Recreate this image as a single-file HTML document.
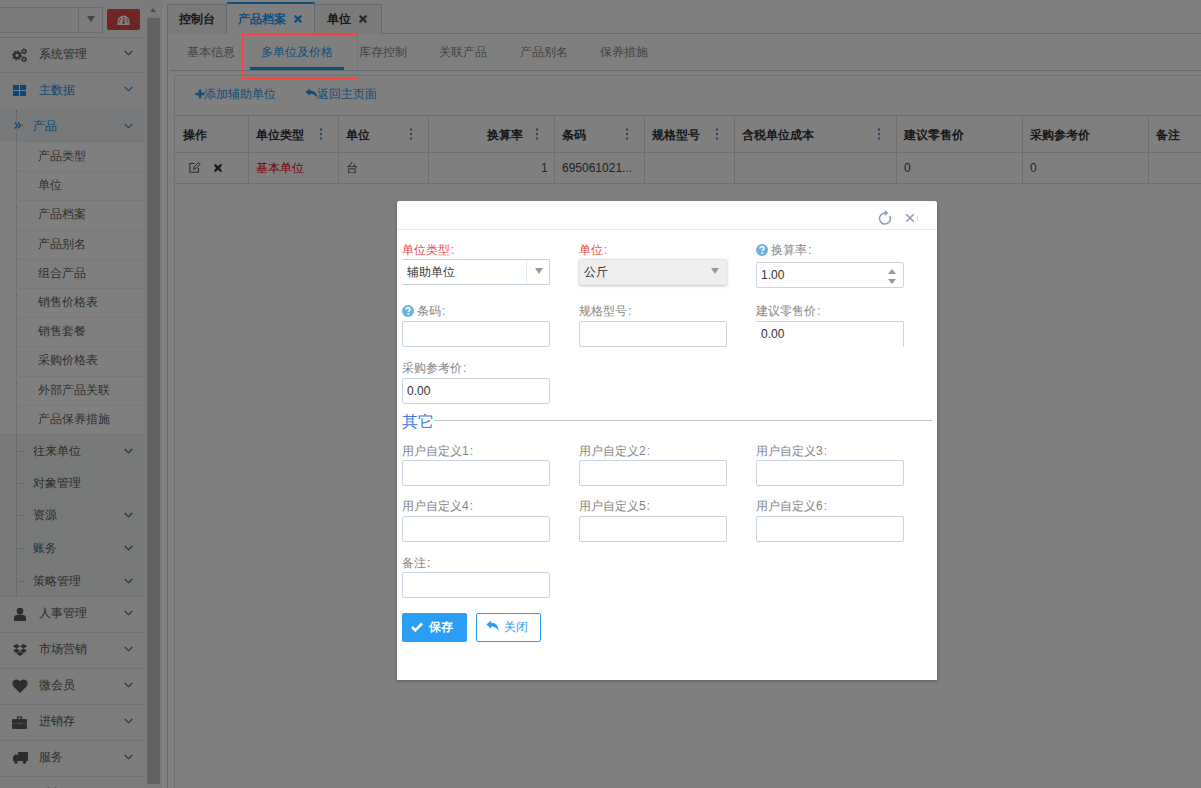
<!DOCTYPE html><html><head><meta charset="utf-8"><style>
*{box-sizing:border-box;margin:0;padding:0}
html,body{width:1201px;height:788px;overflow:hidden;background:#fff;font-family:"Liberation Sans",sans-serif;font-size:12px;color:#393939}
.a{position:absolute;white-space:nowrap}
#ov{position:absolute;left:0;top:0;width:1201px;height:788px;background:rgba(0,0,0,.5)}
#md{position:absolute;left:397px;top:201px;width:540px;height:479px;background:#fff;border-radius:2px 2px 0 0;box-shadow:0 1px 3px rgba(0,0,0,.3)}
.ip{position:absolute;width:148px;height:26px;border:1px solid #c8d4e0;border-radius:2px;background:#fff;font-size:12px;color:#333;padding-left:4px;line-height:25px}
</style></head><body>
<div class="a" style="left:160px;top:0px;width:1041px;height:788px;background:#fff"></div>
<div class="a" style="left:167px;top:33px;width:1034px;height:1px;background:#c5d5e5"></div>
<div class="a" style="left:167px;top:33px;width:1px;height:755px;background:#c5d5e5"></div>
<div class="a" style="left:167px;top:4px;width:60px;height:30px;background:#f4f4f4;border:1px solid #c5d5e5;border-bottom:none"></div>
<div class="a" style="left:179px;top:11px;font-weight:bold;color:#333;font-size:12px;line-height:16px">控制台</div>
<div class="a" style="left:227px;top:2px;width:88px;height:32px;background:#fff;border-top:2px solid #1e9fff;border-right:1px solid #c5d5e5"></div>
<div class="a" style="left:238px;top:11px;color:#1e9fff;font-size:12px;font-weight:bold;line-height:16px">产品档案</div>
<svg class="a" style="left:294px;top:15px" width="8" height="8" viewBox="0 0 9 9"><path d="M1.5 1.5L7.5 7.5M7.5 1.5L1.5 7.5" stroke="#1e9fff" stroke-width="2.6" stroke-linecap="round"/></svg>
<div class="a" style="left:315px;top:4px;width:67px;height:30px;background:#f4f4f4;border:1px solid #c5d5e5;border-left:none;border-bottom:none"></div>
<div class="a" style="left:327px;top:11px;font-weight:bold;color:#333;font-size:12px;line-height:16px">单位</div>
<svg class="a" style="left:359px;top:15px" width="8" height="8" viewBox="0 0 9 9"><path d="M1.5 1.5L7.5 7.5M7.5 1.5L1.5 7.5" stroke="#555" stroke-width="2.6" stroke-linecap="round"/></svg>
<div class="a" style="left:187px;top:44px;color:#888;font-size:12px;line-height:16px">基本信息</div>
<div class="a" style="left:359px;top:44px;color:#888;font-size:12px;line-height:16px">库存控制</div>
<div class="a" style="left:439px;top:44px;color:#888;font-size:12px;line-height:16px">关联产品</div>
<div class="a" style="left:520px;top:44px;color:#888;font-size:12px;line-height:16px">产品别名</div>
<div class="a" style="left:600px;top:44px;color:#888;font-size:12px;line-height:16px">保养措施</div>
<div class="a" style="left:261px;top:44px;color:#1e9fff;font-size:12px;line-height:16px">多单位及价格</div>
<div class="a" style="left:250px;top:67px;width:94px;height:3px;background:#1e9fff"></div>
<div class="a" style="left:170px;top:70px;width:1031px;height:1px;background:#c5d5e5"></div>
<div class="a" style="left:174px;top:75px;width:1030px;height:720px;border:1px solid #dde3e8;background:#fff"></div>
<svg class="a" style="left:195px;top:89px" width="10" height="10" viewBox="0 0 10 10"><path d="M5 0.5V9.5M0.5 5H9.5" stroke="#2a9af2" stroke-width="2.6"/></svg>
<div class="a" style="left:204px;top:86px;color:#2a9af2;font-size:12px;line-height:16px">添加辅助单位</div>
<svg class="a" style="left:305px;top:88px" width="13" height="11" viewBox="0 0 12 10"><path d="M0.5 3.5L4.5 0.3V2.2C8.5 2.2 11.5 4.5 11.5 9.5 10 7 8 5.3 4.5 5.3V7z" fill="#2a9af2"/></svg>
<div class="a" style="left:317px;top:86px;color:#2a9af2;font-size:12px;line-height:16px">返回主页面</div>
<div class="a" style="left:175px;top:115px;width:1026px;height:1px;background:#d5dde5"></div>
<div class="a" style="left:175px;top:152px;width:1026px;height:1px;background:#dcdcdc"></div>
<div class="a" style="left:175px;top:183px;width:1026px;height:1px;background:#dcdcdc"></div>
<div class="a" style="left:248px;top:116px;width:1px;height:67px;background:#dcdcdc"></div>
<div class="a" style="left:338px;top:116px;width:1px;height:67px;background:#dcdcdc"></div>
<div class="a" style="left:428px;top:116px;width:1px;height:67px;background:#dcdcdc"></div>
<div class="a" style="left:554px;top:116px;width:1px;height:67px;background:#dcdcdc"></div>
<div class="a" style="left:644px;top:116px;width:1px;height:67px;background:#dcdcdc"></div>
<div class="a" style="left:734px;top:116px;width:1px;height:67px;background:#dcdcdc"></div>
<div class="a" style="left:896px;top:116px;width:1px;height:67px;background:#dcdcdc"></div>
<div class="a" style="left:1022px;top:116px;width:1px;height:67px;background:#dcdcdc"></div>
<div class="a" style="left:1148px;top:116px;width:1px;height:67px;background:#dcdcdc"></div>
<div class="a" style="left:183px;top:127px;font-weight:bold;color:#333;font-size:12px;line-height:16px">操作</div>
<div class="a" style="left:256px;top:127px;font-weight:bold;color:#333;font-size:12px;line-height:16px">单位类型</div>
<svg class="a" style="left:319px;top:127px" width="4" height="14" viewBox="0 0 4 14"><circle cx="2" cy="2.5" r="1.2" fill="#5a8dc0"/><circle cx="2" cy="7" r="1.2" fill="#5a8dc0"/><circle cx="2" cy="11.5" r="1.2" fill="#5a8dc0"/></svg>
<div class="a" style="left:346px;top:127px;font-weight:bold;color:#333;font-size:12px;line-height:16px">单位</div>
<svg class="a" style="left:409px;top:127px" width="4" height="14" viewBox="0 0 4 14"><circle cx="2" cy="2.5" r="1.2" fill="#5a8dc0"/><circle cx="2" cy="7" r="1.2" fill="#5a8dc0"/><circle cx="2" cy="11.5" r="1.2" fill="#5a8dc0"/></svg>
<div class="a" style="left:487px;top:127px;font-weight:bold;color:#333;font-size:12px;line-height:16px">换算率</div>
<svg class="a" style="left:535px;top:127px" width="4" height="14" viewBox="0 0 4 14"><circle cx="2" cy="2.5" r="1.2" fill="#5a8dc0"/><circle cx="2" cy="7" r="1.2" fill="#5a8dc0"/><circle cx="2" cy="11.5" r="1.2" fill="#5a8dc0"/></svg>
<div class="a" style="left:562px;top:127px;font-weight:bold;color:#333;font-size:12px;line-height:16px">条码</div>
<svg class="a" style="left:625px;top:127px" width="4" height="14" viewBox="0 0 4 14"><circle cx="2" cy="2.5" r="1.2" fill="#5a8dc0"/><circle cx="2" cy="7" r="1.2" fill="#5a8dc0"/><circle cx="2" cy="11.5" r="1.2" fill="#5a8dc0"/></svg>
<div class="a" style="left:652px;top:127px;font-weight:bold;color:#333;font-size:12px;line-height:16px">规格型号</div>
<svg class="a" style="left:715px;top:127px" width="4" height="14" viewBox="0 0 4 14"><circle cx="2" cy="2.5" r="1.2" fill="#5a8dc0"/><circle cx="2" cy="7" r="1.2" fill="#5a8dc0"/><circle cx="2" cy="11.5" r="1.2" fill="#5a8dc0"/></svg>
<div class="a" style="left:742px;top:127px;font-weight:bold;color:#333;font-size:12px;line-height:16px">含税单位成本</div>
<svg class="a" style="left:877px;top:127px" width="4" height="14" viewBox="0 0 4 14"><circle cx="2" cy="2.5" r="1.2" fill="#5a8dc0"/><circle cx="2" cy="7" r="1.2" fill="#5a8dc0"/><circle cx="2" cy="11.5" r="1.2" fill="#5a8dc0"/></svg>
<div class="a" style="left:904px;top:127px;font-weight:bold;color:#333;font-size:12px;line-height:16px">建议零售价</div>
<div class="a" style="left:1030px;top:127px;font-weight:bold;color:#333;font-size:12px;line-height:16px">采购参考价</div>
<div class="a" style="left:1156px;top:127px;font-weight:bold;color:#333;font-size:12px;line-height:16px">备注</div>
<svg class="a" style="left:189px;top:162px" width="12" height="11" viewBox="0 0 12 11"><path d="M5.5 1.5H0.8V10.2H9.5V6" fill="none" stroke="#555" stroke-width="1.1"/><path d="M4.5 7.2L5 5 9.5 0.6 11.2 2.3 6.7 6.7z" fill="none" stroke="#555" stroke-width="1"/></svg>
<svg class="a" style="left:214px;top:164px" width="8" height="8" viewBox="0 0 9 9"><path d="M1.5 1.5L7.5 7.5M7.5 1.5L1.5 7.5" stroke="#333" stroke-width="2.6" stroke-linecap="round"/></svg>
<div class="a" style="left:256px;top:160px;color:#f00000;font-size:12px;line-height:16px">基本单位</div>
<div class="a" style="left:346px;top:160px;color:#444;font-size:12px;line-height:16px">台</div>
<div class="a" style="left:541px;top:160px;color:#444;font-size:12px;line-height:16px">1</div>
<div class="a" style="left:562px;top:160px;color:#444;font-size:12px;line-height:16px">695061021...</div>
<div class="a" style="left:904px;top:160px;color:#444;font-size:12px;line-height:16px">0</div>
<div class="a" style="left:1030px;top:160px;color:#444;font-size:12px;line-height:16px">0</div>
<div class="a" style="left:0px;top:0px;width:145px;height:788px;background:#f8f8f8"></div>
<div class="a" style="left:0px;top:0px;width:145px;height:38px;border-bottom:1px solid #e0e0e0;background:#f8f8f8"></div>
<div class="a" style="left:-2px;top:7px;width:105px;height:26px;border:1px solid #d0d8e0;background:#f6f6f6"></div>
<div class="a" style="left:78px;top:7px;width:25px;height:26px;border:1px solid #d0d8e0;background:#f8f8f8"></div>
<div class="a" style="left:87px;top:16px;width:0px;height:0px;border-left:4px solid transparent;border-right:4px solid transparent;border-top:6px solid #888"></div>
<div class="a" style="left:107px;top:9px;width:33px;height:21px;background:#e04a4a;border-radius:2px"></div>
<svg class="a" style="left:117px;top:15px" width="13" height="11" viewBox="0 0 15 12" preserveAspectRatio="none"><path d="M7.5 0.5A7 7 0 0 0 0.5 7.5V11h14V7.5A7 7 0 0 0 7.5 0.5z" fill="#fff"/><circle cx="7.5" cy="3" r="0.9" fill="#e04a4a"/><circle cx="3.7" cy="4.5" r="0.9" fill="#e04a4a"/><circle cx="11.3" cy="4.5" r="0.9" fill="#e04a4a"/><circle cx="2.6" cy="7.3" r="0.9" fill="#e04a4a"/><circle cx="12.4" cy="7.3" r="0.9" fill="#e04a4a"/><path d="M7.5 8.5L8.3 4" stroke="#e04a4a" stroke-width="1.4"/><circle cx="7.5" cy="8.5" r="1.4" fill="#e04a4a"/></svg>
<div class="a" style="left:0px;top:38px;width:145px;height:35px;background:#f8f8f8;border-bottom:1px solid #e5e5e5"></div><svg class="a" style="left:11px;top:calc(54.5px - 7.0px)" width="16" height="14" viewBox="0 0 16 14"><circle cx="6" cy="7.35" r="2.8" fill="none" stroke="#5a5a5a" stroke-width="2.2"/><circle cx="6" cy="7.35" r="4.3" fill="none" stroke="#5a5a5a" stroke-width="1.4" stroke-dasharray="1.6 1.7"/><circle cx="13" cy="3.35" r="1.7" fill="none" stroke="#5a5a5a" stroke-width="1.3"/><circle cx="13" cy="3.35" r="2.6" fill="none" stroke="#5a5a5a" stroke-width="1" stroke-dasharray="1.3 1.42"/><circle cx="13" cy="11.35" r="1.7" fill="none" stroke="#5a5a5a" stroke-width="1.3"/><circle cx="13" cy="11.35" r="2.6" fill="none" stroke="#5a5a5a" stroke-width="1" stroke-dasharray="1.3 1.42"/></svg><div class="a" style="left:39px;top:45.5px;color:#585858;font-size:12px;line-height:16px">系统管理</div><svg class="a" style="left:123.5px;top:50.0px" width="9" height="6" viewBox="0 0 9 6"><path d="M0.8 1L4.5 4.8 8.2 1" fill="none" stroke="#4c5864" stroke-width="1.15"/></svg>
<div class="a" style="left:0px;top:73px;width:145px;height:37px;background:#f8f8f8;border-bottom:1px solid #e5e5e5"></div><svg class="a" style="left:13px;top:calc(90.5px - 5.5px)" width="13" height="11" viewBox="0 0 13 11"><rect x="0" y="0" width="6" height="5" fill="#1a8cf0"/><rect x="7" y="0" width="6" height="5" fill="#1a8cf0"/><rect x="0" y="6" width="6" height="5" fill="#1a8cf0"/><rect x="7" y="6" width="6" height="5" fill="#1a8cf0"/></svg><div class="a" style="left:39px;top:81.5px;color:#1a8cf0;font-size:12px;line-height:16px">主数据</div><svg class="a" style="left:123.5px;top:86.0px" width="9" height="6" viewBox="0 0 9 6"><path d="M0.8 1L4.5 4.8 8.2 1" fill="none" stroke="#1a8cf0" stroke-width="1.15"/></svg>
<div class="a" style="left:0px;top:109px;width:145px;height:488px;background:#fff;border-bottom:1px solid #e5e5e5"></div>
<div class="a" style="left:0px;top:109px;width:145px;height:33px;background:#eef0f2"></div>
<div class="a" style="left:33px;top:118px;color:#1a8cf0;font-size:12px;line-height:16px">产品</div>
<svg class="a" style="left:14px;top:122px" width="8" height="7" viewBox="0 0 8 7"><path d="M0.8 0.5L3.5 3.5 0.8 6.5M3.8 0.5L6.5 3.5 3.8 6.5" fill="none" stroke="#1a8cf0" stroke-width="1.2"/></svg>
<svg class="a" style="left:123.5px;top:122.5px" width="9" height="6" viewBox="0 0 9 6"><path d="M0.8 1L4.5 4.8 8.2 1" fill="none" stroke="#1a8cf0" stroke-width="1.15"/></svg>
<div class="a" style="left:21px;top:125px;width:4px;height:1px;border-top:1px dotted #9dbdd6"></div>
<div class="a" style="left:18px;top:142.0px;width:127px;height:29px;border-top:1px dotted #e0e0e0;background:#fff"></div>
<div class="a" style="left:38px;top:148.0px;color:#616161;font-size:12px;line-height:16px">产品类型</div>
<div class="a" style="left:18px;top:171.2px;width:127px;height:29px;border-top:1px dotted #e0e0e0;background:#fff"></div>
<div class="a" style="left:38px;top:177.2px;color:#616161;font-size:12px;line-height:16px">单位</div>
<div class="a" style="left:18px;top:200.4px;width:127px;height:29px;border-top:1px dotted #e0e0e0;background:#fff"></div>
<div class="a" style="left:38px;top:206.4px;color:#616161;font-size:12px;line-height:16px">产品档案</div>
<div class="a" style="left:18px;top:229.6px;width:127px;height:29px;border-top:1px dotted #e0e0e0;background:#fff"></div>
<div class="a" style="left:38px;top:235.6px;color:#616161;font-size:12px;line-height:16px">产品别名</div>
<div class="a" style="left:18px;top:258.8px;width:127px;height:29px;border-top:1px dotted #e0e0e0;background:#fff"></div>
<div class="a" style="left:38px;top:264.8px;color:#616161;font-size:12px;line-height:16px">组合产品</div>
<div class="a" style="left:18px;top:288.0px;width:127px;height:29px;border-top:1px dotted #e0e0e0;background:#fff"></div>
<div class="a" style="left:38px;top:294.0px;color:#616161;font-size:12px;line-height:16px">销售价格表</div>
<div class="a" style="left:18px;top:317.2px;width:127px;height:29px;border-top:1px dotted #e0e0e0;background:#fff"></div>
<div class="a" style="left:38px;top:323.2px;color:#616161;font-size:12px;line-height:16px">销售套餐</div>
<div class="a" style="left:18px;top:346.4px;width:127px;height:29px;border-top:1px dotted #e0e0e0;background:#fff"></div>
<div class="a" style="left:38px;top:352.4px;color:#616161;font-size:12px;line-height:16px">采购价格表</div>
<div class="a" style="left:18px;top:375.6px;width:127px;height:29px;border-top:1px dotted #e0e0e0;background:#fff"></div>
<div class="a" style="left:38px;top:381.6px;color:#616161;font-size:12px;line-height:16px">外部产品关联</div>
<div class="a" style="left:18px;top:404.8px;width:127px;height:29px;border-top:1px dotted #e0e0e0;background:#fff"></div>
<div class="a" style="left:38px;top:410.8px;color:#616161;font-size:12px;line-height:16px">产品保养措施</div>
<div class="a" style="left:0px;top:434px;width:145px;height:33px;border-top:1px dotted #e0e0e0;background:#eef3f1"></div>
<div class="a" style="left:33px;top:442.5px;color:#585858;font-size:12px;line-height:16px">往来单位</div>
<div class="a" style="left:18px;top:450.5px;width:6px;height:1px;border-top:1px dotted #9dbdd6"></div>
<svg class="a" style="left:123.5px;top:447.5px" width="9" height="6" viewBox="0 0 9 6"><path d="M0.8 1L4.5 4.8 8.2 1" fill="none" stroke="#4c5864" stroke-width="1.15"/></svg>
<div class="a" style="left:0px;top:467px;width:145px;height:32px;border-top:1px dotted #e0e0e0;background:#eef3f1"></div>
<div class="a" style="left:33px;top:475.0px;color:#585858;font-size:12px;line-height:16px">对象管理</div>
<div class="a" style="left:18px;top:483.0px;width:6px;height:1px;border-top:1px dotted #9dbdd6"></div>
<div class="a" style="left:0px;top:499px;width:145px;height:32px;border-top:1px dotted #e0e0e0;background:#eef3f1"></div>
<div class="a" style="left:33px;top:507.0px;color:#585858;font-size:12px;line-height:16px">资源</div>
<div class="a" style="left:18px;top:515.0px;width:6px;height:1px;border-top:1px dotted #9dbdd6"></div>
<svg class="a" style="left:123.5px;top:512.0px" width="9" height="6" viewBox="0 0 9 6"><path d="M0.8 1L4.5 4.8 8.2 1" fill="none" stroke="#4c5864" stroke-width="1.15"/></svg>
<div class="a" style="left:0px;top:531px;width:145px;height:34px;border-top:1px dotted #e0e0e0;background:#eef3f1"></div>
<div class="a" style="left:33px;top:540.0px;color:#585858;font-size:12px;line-height:16px">账务</div>
<div class="a" style="left:18px;top:548.0px;width:6px;height:1px;border-top:1px dotted #9dbdd6"></div>
<svg class="a" style="left:123.5px;top:545.0px" width="9" height="6" viewBox="0 0 9 6"><path d="M0.8 1L4.5 4.8 8.2 1" fill="none" stroke="#4c5864" stroke-width="1.15"/></svg>
<div class="a" style="left:0px;top:565px;width:145px;height:31px;border-top:1px dotted #e0e0e0;background:#eef3f1"></div>
<div class="a" style="left:33px;top:572.5px;color:#585858;font-size:12px;line-height:16px">策略管理</div>
<div class="a" style="left:18px;top:580.5px;width:6px;height:1px;border-top:1px dotted #9dbdd6"></div>
<svg class="a" style="left:123.5px;top:577.5px" width="9" height="6" viewBox="0 0 9 6"><path d="M0.8 1L4.5 4.8 8.2 1" fill="none" stroke="#4c5864" stroke-width="1.15"/></svg>
<div class="a" style="left:16px;top:110px;width:1px;height:486px;border-left:1px dotted #9dbdd6"></div>
<div class="a" style="left:0px;top:597px;width:145px;height:36px;background:#f8f8f8;border-bottom:1px solid #e5e5e5"></div><svg class="a" style="left:13px;top:calc(614.0px - 7.0px)" width="14" height="14" viewBox="0 0 14 14"><circle cx="7" cy="4" r="3.3" fill="#5a5a5a"/><path d="M1 14V11C1 8.5 3.5 7.5 7 7.5S13 8.5 13 11V14z" fill="#5a5a5a"/></svg><div class="a" style="left:39px;top:605.0px;color:#585858;font-size:12px;line-height:16px">人事管理</div><svg class="a" style="left:123.5px;top:609.5px" width="9" height="6" viewBox="0 0 9 6"><path d="M0.8 1L4.5 4.8 8.2 1" fill="none" stroke="#4c5864" stroke-width="1.15"/></svg>
<div class="a" style="left:0px;top:633px;width:145px;height:36px;background:#f8f8f8;border-bottom:1px solid #e5e5e5"></div><svg class="a" style="left:13px;top:calc(650.0px - 6.0px)" width="14" height="12" viewBox="0 0 14 12"><path d="M3.5 0L0 2.2 3.5 4.5 7 2.2zM10.5 0L7 2.2 10.5 4.5 14 2.2zM3.5 4.5L0 6.8 3.5 9 7 6.8zM10.5 4.5L7 6.8 10.5 9 14 6.8zM3.5 9.8L7 12 10.5 9.8 7 7.6z" fill="#5a5a5a"/></svg><div class="a" style="left:39px;top:641.0px;color:#585858;font-size:12px;line-height:16px">市场营销</div><svg class="a" style="left:123.5px;top:645.5px" width="9" height="6" viewBox="0 0 9 6"><path d="M0.8 1L4.5 4.8 8.2 1" fill="none" stroke="#4c5864" stroke-width="1.15"/></svg>
<div class="a" style="left:0px;top:669px;width:145px;height:36px;background:#f8f8f8;border-bottom:1px solid #e5e5e5"></div><svg class="a" style="left:12px;top:calc(686.0px - 7.0px)" width="16" height="14" viewBox="0 0 16 14"><path d="M8 14L1.5 7.5C-0.5 5.5 0 1 4 0.5 6 0.3 7.3 1.5 8 2.5 8.7 1.5 10 0.3 12 0.5 16 1 16.5 5.5 14.5 7.5z" fill="#5a5a5a"/></svg><div class="a" style="left:39px;top:677.0px;color:#585858;font-size:12px;line-height:16px">微会员</div><svg class="a" style="left:123.5px;top:681.5px" width="9" height="6" viewBox="0 0 9 6"><path d="M0.8 1L4.5 4.8 8.2 1" fill="none" stroke="#4c5864" stroke-width="1.15"/></svg>
<div class="a" style="left:0px;top:705px;width:145px;height:36px;background:#f8f8f8;border-bottom:1px solid #e5e5e5"></div><svg class="a" style="left:12px;top:calc(722.0px - 6.5px)" width="15" height="13" viewBox="0 0 15 13"><path d="M5 0.5h5v2.5h-1.2v-1.3h-2.6v1.3H5z" fill="#5a5a5a"/><rect x="0" y="3" width="15" height="10" rx="1" fill="#5a5a5a"/><rect x="0" y="7" width="15" height="1" fill="#888"/><rect x="6.5" y="6" width="2" height="3" fill="#888"/></svg><div class="a" style="left:39px;top:713.0px;color:#585858;font-size:12px;line-height:16px">进销存</div><svg class="a" style="left:123.5px;top:717.5px" width="9" height="6" viewBox="0 0 9 6"><path d="M0.8 1L4.5 4.8 8.2 1" fill="none" stroke="#4c5864" stroke-width="1.15"/></svg>
<div class="a" style="left:0px;top:741px;width:145px;height:36px;background:#f8f8f8;border-bottom:1px solid #e5e5e5"></div><svg class="a" style="left:13px;top:calc(758.0px - 6.0px)" width="15" height="12" viewBox="0 0 15 12"><rect x="5" y="0" width="10" height="9" fill="#5a5a5a"/><path d="M0 5L2 2.5H5V9H0z" fill="#5a5a5a"/><circle cx="3" cy="10" r="1.8" fill="#5a5a5a"/><circle cx="11.5" cy="10" r="1.8" fill="#5a5a5a"/></svg><div class="a" style="left:39px;top:749.0px;color:#585858;font-size:12px;line-height:16px">服务</div><svg class="a" style="left:123.5px;top:753.5px" width="9" height="6" viewBox="0 0 9 6"><path d="M0.8 1L4.5 4.8 8.2 1" fill="none" stroke="#4c5864" stroke-width="1.15"/></svg>
<div class="a" style="left:0px;top:777px;width:145px;height:36px;background:#f8f8f8;border-bottom:1px solid #e5e5e5"></div><div class="a" style="left:39px;top:785.0px;color:#585858;font-size:12px;line-height:16px">财务</div><svg class="a" style="left:123.5px;top:789.5px" width="9" height="6" viewBox="0 0 9 6"><path d="M0.8 1L4.5 4.8 8.2 1" fill="none" stroke="#4c5864" stroke-width="1.15"/></svg>
<div class="a" style="left:144px;top:0px;width:18px;height:788px;background:#f6f6f6"></div>
<div class="a" style="left:150px;top:8px;width:0px;height:0px;border-left:3.5px solid transparent;border-right:3.5px solid transparent;border-bottom:4px solid #999"></div>
<div class="a" style="left:147px;top:18px;width:13px;height:766px;background:#c4c4c4"></div>
<div id="ov"></div>
<div class="a" style="left:242px;top:34px;width:116px;height:45px;border:1px solid #ff3c3c"></div>
<div id="md"><div class="a" style="left:0px;top:28px;width:540px;height:1px;background:#e8e8e8"></div>
<svg class="a" style="left:481px;top:9px" width="14" height="16" viewBox="0 0 14 16"><path d="M7 3A5.5 5.5 0 1 0 11.76 5.75" fill="none" stroke="#8c9cb4" stroke-width="1.5"/><path d="M6.8 0.3L10.6 3 6.8 5.7z" fill="#8c9cb4"/></svg>
<svg class="a" style="left:508px;top:12px" width="10" height="10" viewBox="0 0 10 10"><path d="M1.2 1.2L8.8 8.8M8.8 1.2L1.2 8.8" stroke="#8c9cb4" stroke-width="1.5"/></svg>
<div class="a" style="left:520px;top:15px;width:1px;height:5px;background:#fcc"></div>
<div class="a" style="left:5px;top:42px;font-size:12px;color:#f5484a;line-height:14px">单位类型<span style="margin-left:1px">:</span></div>
<div class="a" style="left:182px;top:42px;font-size:12px;color:#f5484a;line-height:14px">单位<span style="margin-left:1px">:</span></div>
<svg class="a" style="left:359px;top:43px" width="12" height="12" viewBox="0 0 12 12"><circle cx="6" cy="6" r="6" fill="#6fb3e0"/><path d="M4 4.6C4 3.4 4.9 2.7 6 2.7S8 3.4 8 4.4C8 5.6 6.3 5.8 6.3 7.1" fill="none" stroke="#fff" stroke-width="1.5"/><circle cx="6.3" cy="9" r="0.9" fill="#fff"/></svg><div class="a" style="left:374px;top:42px;font-size:12px;color:#858585;line-height:14px">换算率<span style="margin-left:1px">:</span></div>
<div class="ip" style="left:5px;top:58px;border-left-color:#fff;border-radius:0">辅助单位</div>
<div class="a" style="left:129px;top:59px;width:1px;height:24px;background:#e4e9ee"></div>
<div class="a" style="left:138px;top:67px;width:0px;height:0px;border-left:4px solid transparent;border-right:4px solid transparent;border-top:6px solid #999"></div>
<div class="ip" style="left:182px;top:58px;background:#eee;border-color:#e6e6e6;box-shadow:0 1px 3px rgba(0,0,0,.25)">公斤</div>
<div class="a" style="left:314px;top:67px;width:0px;height:0px;border-left:4px solid transparent;border-right:4px solid transparent;border-top:6px solid #999"></div>
<div class="ip" style="left:359px;top:61px;">1.00</div>
<div class="a" style="left:491px;top:68px;width:0px;height:0px;border-left:4px solid transparent;border-right:4px solid transparent;border-bottom:5px solid #999"></div>
<div class="a" style="left:491px;top:78px;width:0px;height:0px;border-left:4px solid transparent;border-right:4px solid transparent;border-top:5px solid #999"></div>
<svg class="a" style="left:5px;top:104px" width="12" height="12" viewBox="0 0 12 12"><circle cx="6" cy="6" r="6" fill="#6fb3e0"/><path d="M4 4.6C4 3.4 4.9 2.7 6 2.7S8 3.4 8 4.4C8 5.6 6.3 5.8 6.3 7.1" fill="none" stroke="#fff" stroke-width="1.5"/><circle cx="6.3" cy="9" r="0.9" fill="#fff"/></svg><div class="a" style="left:20px;top:103px;font-size:12px;color:#858585;line-height:14px">条码<span style="margin-left:1px">:</span></div>
<div class="a" style="left:182px;top:103px;font-size:12px;color:#858585;line-height:14px">规格型号<span style="margin-left:1px">:</span></div>
<div class="a" style="left:359px;top:103px;font-size:12px;color:#858585;line-height:14px">建议零售价<span style="margin-left:1px">:</span></div>
<div class="ip" style="left:5px;top:120px;"></div>
<div class="ip" style="left:182px;top:120px;"></div>
<div class="ip" style="left:359px;top:120px;border-bottom-color:#fff;border-left-color:#fff;border-radius:0">0.00</div>
<div class="a" style="left:5px;top:160px;font-size:12px;color:#858585;line-height:14px">采购参考价<span style="margin-left:1px">:</span></div>
<div class="ip" style="left:5px;top:177px;">0.00</div>
<div class="a" style="left:5px;top:212px;font-size:16px;color:#3a82e4;line-height:18px">其它</div>
<div class="a" style="left:37px;top:219px;width:498px;height:1px;background:#c4c4c4"></div>
<div class="a" style="left:5px;top:243px;font-size:12px;color:#858585;line-height:14px">用户自定义1<span style="margin-left:1px">:</span></div>
<div class="ip" style="left:5px;top:259px;"></div>
<div class="a" style="left:182px;top:243px;font-size:12px;color:#858585;line-height:14px">用户自定义2<span style="margin-left:1px">:</span></div>
<div class="ip" style="left:182px;top:259px;"></div>
<div class="a" style="left:359px;top:243px;font-size:12px;color:#858585;line-height:14px">用户自定义3<span style="margin-left:1px">:</span></div>
<div class="ip" style="left:359px;top:259px;"></div>
<div class="a" style="left:5px;top:298px;font-size:12px;color:#858585;line-height:14px">用户自定义4<span style="margin-left:1px">:</span></div>
<div class="ip" style="left:5px;top:315px;"></div>
<div class="a" style="left:182px;top:298px;font-size:12px;color:#858585;line-height:14px">用户自定义5<span style="margin-left:1px">:</span></div>
<div class="ip" style="left:182px;top:315px;"></div>
<div class="a" style="left:359px;top:298px;font-size:12px;color:#858585;line-height:14px">用户自定义6<span style="margin-left:1px">:</span></div>
<div class="ip" style="left:359px;top:315px;"></div>
<div class="a" style="left:5px;top:355px;font-size:12px;color:#858585;line-height:14px">备注<span style="margin-left:1px">:</span></div>
<div class="ip" style="left:5px;top:371px;"></div>
<div class="a" style="left:5px;top:412px;width:65px;height:29px;background:#2a9ef4;border-radius:2px"></div>
<svg class="a" style="left:14px;top:421px" width="12" height="10" viewBox="0 0 12 10"><path d="M1 5L4.3 8.3 11 1.5" fill="none" stroke="#fff" stroke-width="2.6"/></svg>
<div class="a" style="left:32px;top:418px;font-size:12px;color:#fff;font-weight:bold;line-height:16px">保存</div>
<div class="a" style="left:79px;top:412px;width:65px;height:29px;background:#fff;border:1px solid #2a9ef4;border-radius:2px"></div>
<svg class="a" style="left:89px;top:419px" width="13" height="12" viewBox="0 0 13 12"><path d="M0.5 4.5L5 0.5V2.8C10 2.8 12.5 6 12.5 11 11 8 9 6.5 5 6.5V8.8z" fill="#2a9ef4"/></svg>
<div class="a" style="left:107px;top:418px;font-size:12px;color:#2a9ef4;line-height:16px">关闭</div></div>
</body></html>
